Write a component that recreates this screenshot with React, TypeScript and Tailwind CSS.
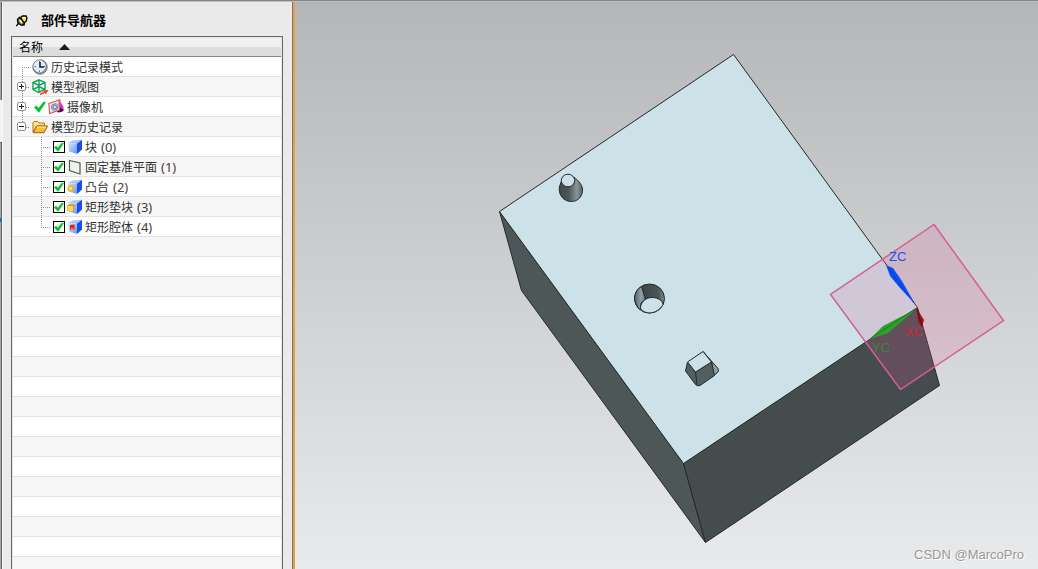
import { useState } from "react";
import type { ReactNode } from "react";

type TreeItem = {
  id: string;
  label: string;
  order?: number;
  icon: ReactNode;
};

// Dotted guide lines between the rows of the tree
function Guide({ up, down, x, width }: { up: boolean; down: boolean; x: number; width: number }) {
  return (
    <svg width={width} height="20" viewBox={`0 0 ${width} 20`} className="block shrink-0" fill="none" stroke="#909090" strokeDasharray="1 1" shapeRendering="crispEdges">
      {up && <path d={`M${x + 0.5} 0V10`} />}
      {down && <path d={`M${x + 0.5} 10V20`} />}
      <path d={`M${x} 10.5H${width - 2}`} />
    </svg>
  );
}

function PinIcon() {
  return (
    <svg width="13" height="12" viewBox="0 0 13 12" className="block">
      <path d="M0 11 3 8" stroke="#000" strokeWidth="1.200" />
      <path d="M1.500 4.500 3.500 2.500 6 4 8.500 7.500 8 10 5 10 2 8Z" fill="#8b8720" stroke="#000" strokeWidth="1.400" />
      <path d="M4.500 2.500 6.500 1 10 1 11 3 10 6.500 8 7.500Z" fill="#f4ee42" stroke="#000" strokeWidth="1.300" />
      <path d="M3.500 5 6 8" stroke="#fff" strokeWidth="1.200" />
      <path d="M7 2.500 9 2.500" stroke="#fff" />
    </svg>
  );
}

function ClockIcon() {
  return (
    <svg width="16" height="16" viewBox="0 0 16 16" className="block">
      <circle cx="8" cy="8" r="7.200" fill="#8894a0" stroke="#6a747c" strokeWidth="1" />
      <circle cx="7.500" cy="7.300" r="5.500" fill="#dceefc" stroke="#f8fbfd" />
      <path d="M7.500 2v1.500M7.500 11.500V13M2.500 7.500H4M11.500 7.500H13" stroke="#536b80" />
      <path d="M8 3V8H12" fill="none" stroke="#17222c" strokeWidth="1.600" />
    </svg>
  );
}

function ModelViewIcon() {
  return (
    <svg width="17" height="17" viewBox="0 0 17 17" className="block" fill="none">
      <path d="M7 .8 13 3.500V10.500L6.500 13.500 1 10.500V3.500ZM1 3.500 7 6.500 13 3.500M7 .8V13M1 10.500 7 7.500 13 10.500" stroke="#10a35a" strokeWidth="1.400" />
      <path d="M8 15.500 13 13" stroke="#f04a23" strokeWidth="1.800" />
      <path d="M11 11 16.500 11 13.500 15.500Z" fill="#f04a23" />
    </svg>
  );
}

function CameraIcon() {
  return (
    <svg width="16" height="16" viewBox="0 0 16 16" className="block">
      <path d="M8 3 12 2 15.500 8V12L10 14Z" fill="#c935d8" />
      <path d="M11 8 16 11 13 13 9 13Z" fill="#3a1444" />
      <path d="M.8 4.500 11 1 11.500 11 1.500 14.500Z" fill="#eadff0" stroke="#e2573f" strokeWidth="1.100" />
      <path d="M4 6 8 4.500 10 6.500 9.500 10 5.500 11.500 3.500 9.500Z" fill="#a8bdd8" stroke="#7189a8" />
      <circle cx="6.800" cy="8" r="1.700" fill="#e8eef8" stroke="#6f7fae" />
      <path d="M10 1.500 12 0 13 2Z" fill="#ee4d2e" />
    </svg>
  );
}

function FolderIcon() {
  return (
    <svg width="16" height="14" viewBox="0 0 16 14" className="block">
      <path d="M1 12V2.500L2 1.500H5.500L7 3H12.500V6H5L1 12Z" fill="#ffe48a" stroke="#ab7614" />
      <path d="M1.200 12.700 4.500 6H15.500L12 12.700Z" fill="#f8bd32" stroke="#94620b" />
      <path d="M5 7H14" stroke="#fff0ac" />
    </svg>
  );
}

function Check({ className }: { className?: string }) {
  return (
    <svg viewBox="0 0 12 12" className={className}>
      <path d="M0 6.500 2.500 4.500 4.500 7 9.500 .8 12 1.200 5 11.800Z" fill="#0cc02c" />
    </svg>
  );
}

function BlockIcon({ children }: { children?: ReactNode }) {
  return (
    <svg width="16" height="16" viewBox="0 0 16 16" className="block">
      <defs>
        <linearGradient id="blockFront" x1="0" y1="0" x2="1" y2="1">
          <stop offset="0" stopColor="#d8e6ff" />
          <stop offset="1" stopColor="#6695f5" />
        </linearGradient>
      </defs>
      <path d="M1 4 5.500 1.500 15 .8 10 4.500Z" fill="#a9c7fb" />
      <path d="M1 4 10 4.500V15L2 12.500Z" fill="url(#blockFront)" />
      <path d="M10 4.500 15 .8V10.500L10 15Z" fill="#194ee8" />
      {children}
    </svg>
  );
}

const features: TreeItem[] = [
  { id: "block", label: "块", order: 0, icon: <BlockIcon /> },
  {
    id: "datum",
    label: "固定基准平面",
    order: 1,
    icon: (
      <svg width="16" height="16" viewBox="0 0 16 16" className="block">
        <path d="M2.500 1.500 13 4V15L2.500 11.500Z" fill="#edf4ed" stroke="#4f5a50" strokeWidth="1.200" />
      </svg>
    ),
  },
  {
    id: "boss",
    label: "凸台",
    order: 2,
    icon: (
      <BlockIcon>
        <path d="M.5 8 4 5.500 7 7V11L3 13 .5 11Z" fill="#f7bc3d" />
        <circle cx="3.500" cy="9.500" r="2.400" fill="#ffdb72" stroke="#d9952b" strokeWidth=".7" />
      </BlockIcon>
    ),
  },
  {
    id: "pad",
    label: "矩形垫块",
    order: 3,
    icon: (
      <BlockIcon>
        <path d="M0 6.500 3 5 8 5.500 6.500 12.500 0 12Z" fill="#d69a25" />
        <path d="M.5 7H6V12H.5Z" fill="#ffd768" />
      </BlockIcon>
    ),
  },
  {
    id: "pocket",
    label: "矩形腔体",
    order: 4,
    icon: (
      <BlockIcon>
        <path d="M3 6 7.500 5.500V11L3 10.500Z" fill="#d02a14" />
        <path d="M3 10.500 5 8.500 7.500 11Z" fill="#ff8b45" />
      </BlockIcon>
    ),
  },
];

const rowClass = "flex h-5 items-center whitespace-nowrap";

function Expander({ label, open, onClick }: { label: string; open: boolean; onClick: () => void }) {
  return (
    <button
      type="button"
      aria-label={label}
      aria-expanded={open}
      onClick={onClick}
      className="absolute left-1 top-[5px] size-[9px] rounded-xs border border-[#929292] bg-white"
    >
      <svg viewBox="0 0 7 7" className="block size-[7px]" stroke="#222" shapeRendering="crispEdges">
        <path d="M1 3.500H6" />
        {!open && <path d="M3.500 1V6" />}
      </svg>
    </button>
  );
}

function Navigator() {
  const [open, setOpen] = useState<Record<string, boolean>>({ history: true });
  const [enabled, setEnabled] = useState<string[]>(features.map((f) => f.id));

  const toggle = (id: string) => setOpen({ ...open, [id]: !open[id] });
  const toggleFeature = (id: string) =>
    setEnabled(enabled.includes(id) ? enabled.filter((e) => e !== id) : [...enabled, id]);

  return (
    <aside className="flex w-[290px] shrink-0 flex-col border-l border-[#f8f8f8] bg-[#eaeaea] pl-2 pr-[9px]">
      <header className="flex h-[34px] shrink-0 items-center gap-3 pl-[5px] pt-1">
        <PinIcon />
        <h1 className="text-[13px] font-bold leading-5 text-black">部件导航器</h1>
      </header>

      <section className="flex min-h-0 flex-1 flex-col overflow-hidden border border-b-0 border-[#666] bg-[#e6e6e6] px-px pt-px">
        <button
          type="button"
          className="flex h-[19px] shrink-0 items-center gap-4 border-b border-[#858585] bg-linear-to-b from-[#f0f2f2] from-50% to-[#dcdede] to-50% pl-1.5 text-left text-[12px] leading-4 text-black"
        >
          <span className="pt-0.5">名称</span>
          <svg width="11" height="6" viewBox="0 0 11 6">
            <path d="M5.500 0 11 6H0Z" fill="#1c1c1c" />
          </svg>
        </button>

        <ul
          role="tree"
          className="flex-1 bg-[repeating-linear-gradient(to_bottom,#fff_0px,#fff_19px,#e2e2e2_19px,#e2e2e2_20px,#f6f6f6_20px,#f6f6f6_39px,#e2e2e2_39px,#e2e2e2_40px)] text-[12px] leading-5 text-[#303030]"
        >
          <li role="treeitem" className={rowClass}>
            <Guide up={false} down x={9} width={19} />
            <ClockIcon />
            <span className="pl-[3px] pt-0.5">历史记录模式</span>
          </li>
          <li role="treeitem" className={rowClass}>
            <div className="relative">
              <Guide up down x={9} width={19} />
              <Expander label="模型视图" open={!!open.views} onClick={() => toggle("views")} />
            </div>
            <ModelViewIcon />
            <span className="pl-0.5 pt-0.5">模型视图</span>
          </li>
          <li role="treeitem" className={rowClass}>
            <div className="relative">
              <Guide up down x={9} width={19} />
              <Expander label="摄像机" open={!!open.cameras} onClick={() => toggle("cameras")} />
            </div>
            <Check className="ml-0.5 mr-0.5 size-3" />
            <CameraIcon />
            <span className="pl-[3px] pt-0.5">摄像机</span>
          </li>
          <li role="treeitem">
            <div className={rowClass}>
              <div className="relative">
                <Guide up down={false} x={9} width={19} />
                <Expander label="模型历史记录" open={open.history} onClick={() => toggle("history")} />
              </div>
              <FolderIcon />
              <span className="pl-[3px] pt-0.5">模型历史记录</span>
            </div>
            {open.history && (
              <ul role="group" className="pl-[19px]">
                {features.map((f, i) => (
                  <li key={f.id} role="treeitem" className={rowClass}>
                    <Guide up down={i < features.length - 1} x={9} width={21} />
                    <label className="flex items-center">
                      <span className="relative mr-0.5 block size-3">
                        <input
                          type="checkbox"
                          checked={enabled.includes(f.id)}
                          onChange={() => toggleFeature(f.id)}
                          className="peer block size-3 appearance-none border border-black bg-white"
                        />
                        <Check className="pointer-events-none absolute inset-px hidden size-[10px] peer-checked:block" />
                      </span>
                      {f.icon}
                      <span className="pl-0.5 pt-0.5">{f.label}</span>
                      <span className="pl-1 font-['Noto_Sans',sans-serif] text-[13px] text-[#4b3b35]">({f.order})</span>
                    </label>
                  </li>
                ))}
              </ul>
            )}
          </li>
        </ul>
      </section>
    </aside>
  );
}

function Viewport() {
  return (
    <main className="relative min-w-0 flex-1 overflow-hidden border-l-2 border-[#ee9a4d] bg-linear-to-b from-[#b5b6b7] to-[#e9eaeb]">
      <svg viewBox="295 2 743 567" preserveAspectRatio="xMidYMid meet" className="block size-full" role="img" aria-label="模型">
        <defs>
          <linearGradient id="boss" x1="0" x2="1">
            <stop offset="0" stopColor="#3f494b" />
            <stop offset=".4" stopColor="#4b5658" />
            <stop offset=".75" stopColor="#879498" />
            <stop offset="1" stopColor="#5a6568" />
          </linearGradient>
          <linearGradient id="holeLeft" x1="0" x2="1">
            <stop offset="0" stopColor="#56656a" />
            <stop offset=".6" stopColor="#8fa1a7" />
            <stop offset="1" stopColor="#657478" />
          </linearGradient>
          <linearGradient id="holeRight" x1="0" x2="1">
            <stop offset="0" stopColor="#343d40" />
            <stop offset=".8" stopColor="#4b5659" />
            <stop offset="1" stopColor="#7b898d" />
          </linearGradient>
        </defs>

        {/* solid block */}
        <g stroke="#24292a" strokeWidth="1" strokeLinejoin="round">
          <path d="M499.500 211.500 521.500 290.500 705.500 542.500 683.500 463.500Z" fill="#4e5758" />
          <path d="M683.500 463.500 705.500 542.500 939.500 385.500 917.500 307.500Z" fill="#454c4e" />
          <path d="M733.500 54.500 499.500 211.500 683.500 463.500 917.500 307.500Z" fill="#cde1e8" />
        </g>

        {/* boss */}
        <g stroke="#24292a">
          <path d="M561.500 181 559.300 187C558.500 196 564 201.500 571.500 201.500 578 201.500 583 196 582.500 189 582 184 577.500 180 574.500 177.500Z" fill="url(#boss)" />
          <ellipse cx="568" cy="180.500" rx="6.700" ry="6.300" fill="#cde1e8" />
        </g>

        {/* hole */}
        <g stroke="#24292a">
          <ellipse cx="649.500" cy="298.500" rx="15" ry="14.500" fill="url(#holeRight)" />
          <path d="M641.500 286.500C635 290 633 298 636 304 637.500 307.500 639.500 309.500 640.500 309.500L641 303 645.500 299Z" fill="url(#holeLeft)" />
          <path d="M640.500 309C640 303 645 297.500 652 297.500 658 297.500 662.500 300.500 663 304.500 660 310 655 312.500 650 313 646 313 643 311.500 640.500 309Z" fill="#cde1e8" />
        </g>

        {/* rectangular pad */}
        <g stroke="#24292a" strokeLinejoin="round">
          <path d="M703 351.500 718 368.500Q719.500 371 717 373L713.500 375.500 711.500 362Z" fill="#8f9da1" />
          <path d="M687.500 362 685.500 371 695.500 384.500Q697.500 386.500 700 385.500L714.500 375.500 711.500 362 695.500 372Z" fill="#535e60" />
          <path d="M695.500 372 697 385" />
          <path d="M687.500 362 703 351.500 711.500 362 695.500 372Z" fill="#cde1e8" />
        </g>

        {/* datum plane */}
        <path d="M934 224.500 1003.500 320.500 900.500 389.500 830.500 294.500Z" fill="#da5e96" fillOpacity=".2" stroke="#d45f98" strokeWidth="1.500" />

        {/* work coordinate system */}
        <path d="M886 265 893 268 902 281 915 304 900 288 890 276Z" fill="#0c50f4" />
        <path d="M888 268 914 303" stroke="#0735b8" strokeWidth=".7" />
        <path d="M916 309 883 326 870 339 888 333Z" fill="#2ba32b" />
        <path d="M871 338 915 309" stroke="#176c1a" strokeWidth=".8" />
        <path d="M916.500 308 924 320 922 327 918 322Z" fill="#9c1518" />
        <path d="M917 309 922 326" stroke="#5d0b0d" />
        <g className="font-['Liberation_Sans',Arial,sans-serif] text-[13px]">
          <text x="889" y="261" fill="#1351f2">ZC</text>
          <text x="905" y="336" fill="#cc2b34">XC</text>
          <text x="872" y="352" fill="#34893b">YC</text>
        </g>
      </svg>
      <p className="absolute bottom-1 right-[14px] font-['Liberation_Sans',Arial,sans-serif] text-[13px] leading-5 text-[#999] [text-shadow:1px_1px_0_#fff]">
        CSDN @MarcoPro
      </p>
    </main>
  );
}

export default function App() {
  return (
    <div className="flex h-screen flex-col overflow-hidden border-t border-[#858585] bg-[#eaeaea] font-['Liberation_Sans','Noto_Sans_CJK_SC',sans-serif]">
      <div className="flex min-h-0 flex-1 border-t border-[#bdbdbd]">
        {/* edge of the resource bar */}
        <div className="flex w-0.5 shrink-0 flex-col">
          <div className="h-[98px] border-r border-[#666] bg-[#a5a5a5]" />
          <div className="h-[42px] bg-[#f4f4f4]" />
          <div className="h-[76px] border-r border-t border-[#666] bg-[#a5a5a5]" />
          <div className="h-1 bg-[#3565cc]" />
          <div className="flex-1 border-r border-[#666] bg-[#a5a5a5]" />
        </div>
        <Navigator />
        <div className="w-px shrink-0 bg-[#777]" />
        <Viewport />
      </div>
    </div>
  );
}
